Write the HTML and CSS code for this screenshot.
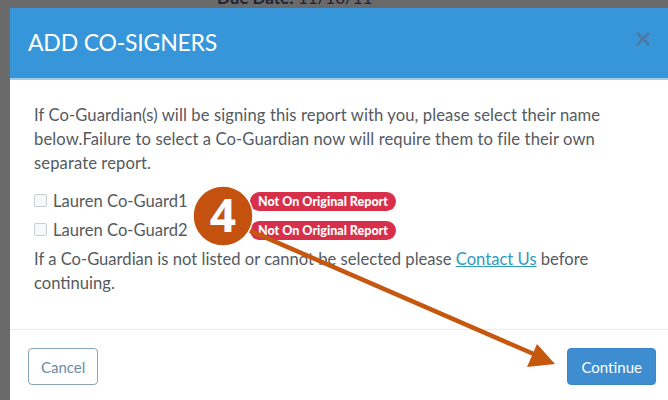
FILE: index.html
```html
<!DOCTYPE html>
<html lang="en">
<head>
<meta charset="utf-8">
<title>Add Co-Signers</title>
<link rel="stylesheet" href="styles.css">
</head>
<body>
<div class="page">
  <p class="due"><b>Due Date:</b> 11/10/11</p>
</div>

<div class="modal">
  <header class="modal-header">
    <h1 class="modal-title">ADD CO-SIGNERS</h1>
    <span class="close">&times;</span>
  </header>
  <section class="modal-body">
    <p class="intro">If Co-Guardian(s) will be signing this report with you, please select their name below.Failure to select a Co-Guardian now will require them to file their own separate report.</p>
    <ul class="signers">
      <li class="signer">
        <label class="signer-label"><span class="check"></span>Lauren Co-Guard1</label>
        <span class="badge">Not On Original Report</span>
      </li>
      <li class="signer">
        <label class="signer-label"><span class="check"></span>Lauren Co-Guard2</label>
        <span class="badge">Not On Original Report</span>
      </li>
    </ul>
    <p class="note">If a Co-Guardian is not listed or cannot be selected please <a href="#" class="link">Contact Us</a> before continuing.</p>
  </section>
  <footer class="modal-footer">
    <button class="btn btn-cancel">Cancel</button>
    <button class="btn btn-continue">Continue</button>
  </footer>
</div>

<!-- step marker and pointer arrow drawn on top of the dialog -->
<svg class="callout" width="668" height="400" viewBox="0 0 668 400">
  <line x1="246" y1="229" x2="536" y2="355" stroke="#c5570f" stroke-width="4.5" stroke-linecap="round"/>
  <polygon points="555,364 527,367 537,344" fill="#c5570f"/>
  <circle cx="223" cy="216" r="30" fill="#c4520e" stroke="#ffffff" stroke-width="1.5"/>
  <text x="223" y="232" text-anchor="middle" class="step">4</text>
</svg>
</body>
</html>
```

FILE: styles.css
```css
html, body {
  margin: 0;
  padding: 0;
}

body {
  width: 668px;
  height: 400px;
  overflow: hidden;
  position: relative;
  background: #6a6a6a;
  font-family: Lato, "Liberation Sans", sans-serif;
}

.page {
  padding: 0 0 0 217px;
}

.due {
  margin: 0;
  margin-top: -12px;
  font-size: 17px;
  line-height: 20px;
  color: #1d2430;
}

.due b {
  font-weight: 700;
}

.modal {
  position: absolute;
  left: 10px;
  top: 8px;
  width: 664px;
  height: 410px;
  background: #ffffff;
  display: flex;
  flex-direction: column;
}

.modal-header {
  background: #3796d9;
  border-bottom: 2px solid #9fcdee;
  display: flex;
  align-items: center;
  justify-content: space-between;
  padding: 0 22px 0 18px;
  box-sizing: border-box;
  height: 72px;
}

.modal-title {
  margin: 0;
  color: #ffffff;
  font-weight: 400;
  font-size: 23px;
  letter-spacing: -0.2px;
  padding-bottom: 2px;
}

.close {
  color: #4a7aa6;
  font-size: 30px;
  font-weight: 700;
  line-height: 1;
  margin-top: -12px;
}

.modal-body {
  padding: 23px 20px 0 24px;
  color: #555a60;
  font-size: 16.6px;
  line-height: 24px;
  height: 250px;
  box-sizing: border-box;
  border-bottom: 1px solid #e9ecef;
}

.intro {
  margin: 0;
  letter-spacing: 0.1px;
}

.signers {
  list-style: none;
  margin: 11px 0 3px 0;
  padding: 0;
}

.signer {
  display: flex;
  align-items: center;
  height: 29px;
}

.signer-label {
  display: flex;
  align-items: center;
  width: 216px;
}

.check {
  width: 11px;
  height: 11px;
  border: 1px solid #c9ccd0;
  border-radius: 2px;
  background: #f8f8f8;
  margin-right: 6px;
  flex: none;
}

.badge {
  display: inline-block;
  background: #d8304a;
  color: #ffffff;
  font-size: 12.5px;
  font-weight: 900;
  line-height: 19px;
  height: 19px;
  padding: 0 8px;
  border-radius: 10px;
  margin-top: 1px;
}

.note {
  margin: 0;
}

.link {
  color: #2e9bc0;
  text-decoration: underline;
}

.modal-footer {
  display: flex;
  justify-content: space-between;
  align-items: flex-start;
  padding: 18px 0 0 18px;
  width: 646px;
  box-sizing: border-box;
}

.btn {
  font-family: Lato, "Liberation Sans", sans-serif;
  font-size: 15px;
  height: 37px;
  border-radius: 4px;
  padding: 0 12px;
  cursor: pointer;
}

.btn-cancel {
  background: #ffffff;
  border: 1px solid #8aa4bd;
  color: #6a8aa8;
}

.btn-continue {
  background: #3d8dd0;
  border: 1px solid #3a86c6;
  color: #ffffff;
  padding: 0 13px;
}

.callout {
  position: absolute;
  left: 0;
  top: 0;
}

.step {
  fill: #ffffff;
  font-family: "Open Sans", "Liberation Sans", sans-serif;
  font-weight: 700;
  font-size: 46px;
}
```
